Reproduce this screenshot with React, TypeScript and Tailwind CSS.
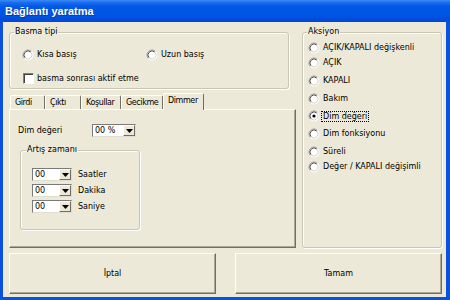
import React from "react";

const font = { fontFamily: '"DejaVu Sans", Verdana, sans-serif' };

function Radio({ checked = false }: { checked?: boolean }) {
  return (
    <svg width="12" height="12" viewBox="0 0 12 12" className="shrink-0">
      <circle cx="6" cy="6" r="5" fill="#fff" />
      <path d="M2.46 9.54 A5 5 0 0 1 9.54 2.46" stroke="#a0a0a0" fill="none" />
      <path d="M3.17 8.83 A4 4 0 0 1 8.83 3.17" stroke="#505050" fill="none" />
      <path d="M9.54 2.46 A5 5 0 0 1 2.46 9.54" stroke="#ffffff" fill="none" />
      <path d="M8.83 3.17 A4 4 0 0 1 3.17 8.83" stroke="#d8d4c4" fill="none" />
      {checked && <circle cx="6" cy="6" r="1.6" fill="#000" />}
    </svg>
  );
}

function Checkbox() {
  return (
    <div className="w-[11px] h-[11px] shrink-0 bg-white border-t border-l border-[#808080] border-r border-b border-r-white border-b-white shadow-[inset_1px_1px_0_#404040]" />
  );
}

function Combo({ value, width }: { value: string; width: string }) {
  return (
    <div
      className={`${width} h-[13px] flex bg-white border-t border-l border-[#7a7a7a] border-r border-b border-r-[#e0ddd0] border-b-[#e0ddd0]`}
    >
      <div className="flex-1 pl-[2px] text-[8px] leading-[11px] text-black">{value}</div>
      <div className="w-[12px] h-[11px] flex items-center justify-center bg-[#ece9d8] border-t border-l border-white border-r border-b border-r-[#716f64] border-b-[#716f64]">
        <svg width="7" height="4" viewBox="0 0 7 4">
          <path d="M0 0 H7 L3.5 4 Z" fill="#000" />
        </svg>
      </div>
    </div>
  );
}

const tabs = [
  { label: "Girdi", w: "w-[35px]" },
  { label: "Çıktı", w: "w-[36px]" },
  { label: "Koşullar", w: "w-[40px]" },
  { label: "Gecikme", w: "w-[42px]" },
];

const actions = [
  { label: "AÇIK/KAPALI değişkenli", mt: "mt-[5px]" },
  { label: "AÇIK", mt: "mt-[3px]" },
  { label: "KAPALI", mt: "mt-[6px]" },
  { label: "Bakım", mt: "mt-[6px]" },
  { label: "Dim değeri", mt: "mt-[5px]", checked: true },
  { label: "Dim fonksiyonu", mt: "mt-[6px]" },
  { label: "Süreli", mt: "mt-[6px]" },
  { label: "Değer / KAPALI değişimli", mt: "mt-[3px]" },
];

const group =
  "border border-[#c9c6b6] rounded-[3px] shadow-[1px_1px_0_#fff,inset_1px_1px_0_#fff] flex flex-col";

export default function App() {
  return (
    <div className="w-[450px] h-[300px] flex flex-col bg-[#0a52de] text-black" style={font}>
      <div className="h-[22px] shrink-0 flex items-center pl-[5px] bg-[linear-gradient(to_bottom,#3c8cf6_0%,#1a6bf0_12%,#0058e6_30%,#0054e3_70%,#0048d4_100%)]">
        <span
          className="text-white font-bold text-[11px] leading-none [text-shadow:1px_1px_0_#0a3a9e]"
          style={{ fontFamily: '"Liberation Sans", Arial, sans-serif' }}
        >
          Bağlantı yaratma
        </span>
      </div>

      <div className="flex-1 ml-[3px] mr-[4px] mb-[3px] bg-[#ece9d8] flex flex-col text-[8px] leading-[10px]">
        <div className="flex pt-[5px] pl-[6px]">
          <div className="w-[287px] flex flex-col">
            <fieldset className={`w-[280px] h-[62px] ${group}`}>
              <legend className="ml-[4px] px-[1px] leading-[10px]">Basma tipi</legend>
              <div className="flex items-center mt-[12px] pl-[12px]">
                <div className="w-[124px] flex items-center gap-[3px]">
                  <Radio />
                  <span>Kısa basış</span>
                </div>
                <div className="flex items-center gap-[3px]">
                  <Radio />
                  <span>Uzun basış</span>
                </div>
              </div>
              <div className="flex items-center mt-[12px] pl-[13px] gap-[3px]">
                <Checkbox />
                <span>basma sonrası aktif etme</span>
              </div>
            </fieldset>

            <div className="mt-[4px] h-[16px] flex items-end pl-[1px]">
              {tabs.map((t) => (
                <div
                  key={t.label}
                  className={`${t.w} h-[14px] pl-[4px] tracking-[-0.4px] flex items-center border-t border-l border-white border-r border-r-[#716f64] rounded-t-[2px]`}
                >
                  {t.label}
                </div>
              ))}
              <div className="w-[41px] h-[17px] -mb-px relative pl-[4px] pb-[2px] tracking-[-0.4px] flex items-center bg-[#ece9d8] border-t border-l border-white border-r border-r-[#716f64] rounded-t-[2px]">
                Dimmer
              </div>
            </div>
            <div className="w-[287px] h-[139px] flex flex-col border-t border-l border-white border-r border-b border-r-[#716f64] border-b-[#716f64] shadow-[inset_-1px_-1px_0_#aca899]">
              <div className="flex items-center mt-[14px] pl-[8px]">
                <span className="w-[74px]">Dim değeri</span>
                <Combo value="00 %" width="w-[44px]" />
              </div>
              <fieldset className={`ml-[10px] mt-[8px] w-[120px] h-[85px] ${group}`}>
                <legend className="ml-[5px] px-[1px] leading-[10px]">Artış zamanı</legend>
                <div className="mt-[13px] pl-[11px] flex flex-col gap-[3px]">
                  {["Saatler", "Dakika", "Saniye"].map((l) => (
                    <div key={l} className="flex items-center gap-[6px]">
                      <Combo value="00" width="w-[40px]" />
                      <span>{l}</span>
                    </div>
                  ))}
                </div>
              </fieldset>
            </div>
          </div>

          <fieldset className={`ml-[6px] w-[140px] h-[221px] ${group}`}>
            <legend className="ml-[4px] px-[1px] leading-[10px]">Aksiyon</legend>
            {actions.map((a) => (
              <div key={a.label} className={`${a.mt} pl-[5px] flex items-center`}>
                <Radio checked={a.checked} />
                {a.checked ? (
                  <span className="ml-[1px] px-[1px] border border-dotted border-black leading-[9px]">{a.label}</span>
                ) : (
                  <span className="ml-[3px]">{a.label}</span>
                )}
              </div>
            ))}
          </fieldset>
        </div>

        <div className="flex mt-[5px] pl-[6px] gap-[19px]">
          <button className="w-[207px] h-[41px] border-t border-l border-white border-r border-b border-r-[#716f64] border-b-[#716f64] shadow-[inset_-1px_-1px_0_#aca899] bg-[#ece9d8] text-[8px]">
            İptal
          </button>
          <button className="w-[207px] h-[41px] border-t border-l border-white border-r border-b border-r-[#716f64] border-b-[#716f64] shadow-[inset_-1px_-1px_0_#aca899] bg-[#ece9d8] text-[8px]">
            Tamam
          </button>
        </div>
      </div>
    </div>
  );
}
